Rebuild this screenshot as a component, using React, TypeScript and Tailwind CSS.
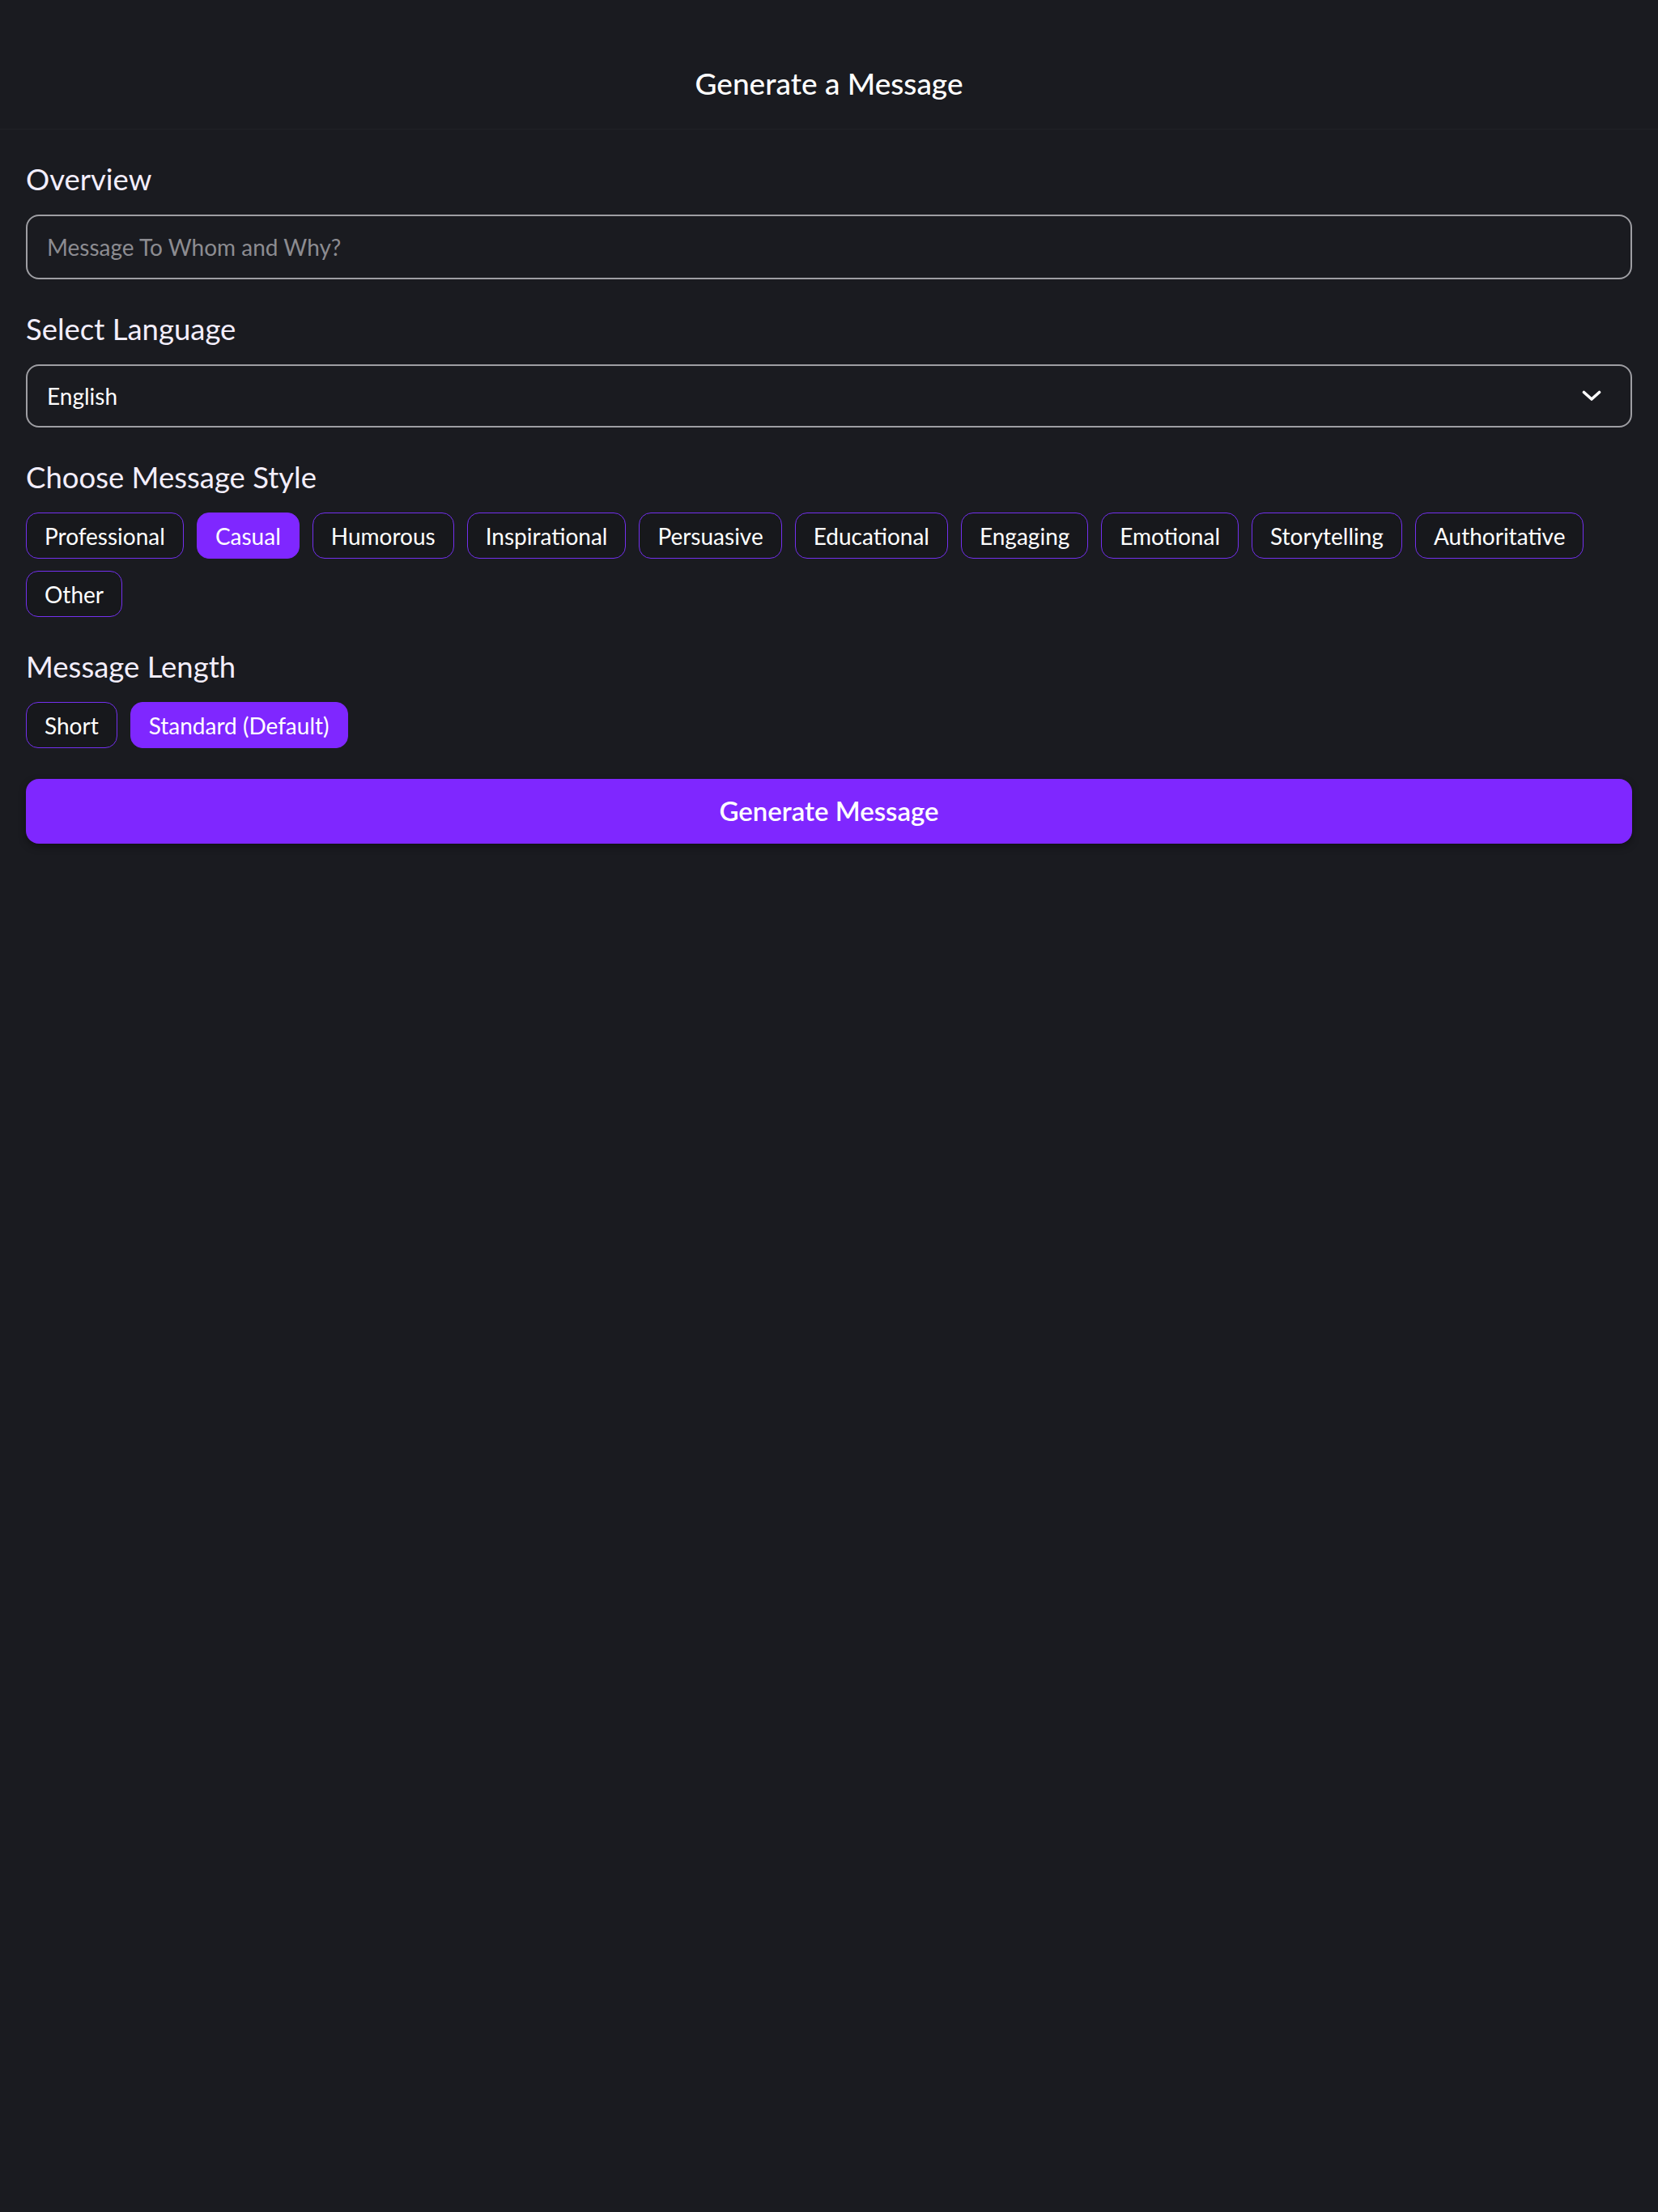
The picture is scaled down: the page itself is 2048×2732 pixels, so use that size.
import React, { useState } from "react";

const styles = [
  "Professional",
  "Casual",
  "Humorous",
  "Inspirational",
  "Persuasive",
  "Educational",
  "Engaging",
  "Emotional",
  "Storytelling",
  "Authoritative",
  "Other",
];

const lengths = ["Short", "Standard (Default)"];

function Chip({ label, active, onClick }: { label: string; active: boolean; onClick: () => void }) {
  return (
    <button
      onClick={onClick}
      className={
        active
          ? "h-[57px] px-[22px] flex items-center rounded-[15px] border-[1.5px] border-[#7f27ff] bg-[#7f27ff] text-white text-[28px] leading-[34px]"
          : "h-[57px] px-[22px] flex items-center rounded-[15px] border-[1.5px] border-[#7330ee] bg-[#17181c] text-white text-[28px] leading-[34px]"
      }
    >
      {label}
    </button>
  );
}

function Label({ children }: { children: React.ReactNode }) {
  return <h2 className="text-[36.5px] leading-[42px] text-[#f3eefc] mb-[23px]">{children}</h2>;
}

export default function App() {
  const [style, setStyle] = useState("Casual");
  const [length, setLength] = useState("Standard (Default)");

  return (
    <div className="min-h-screen bg-[#1a1b20] text-white font-['Lato',sans-serif]">
      <header className="h-[160px] pt-[46px] flex items-center justify-center border-b border-[#202127]">
        <h1 className="text-[37px] font-medium">Generate a Message</h1>
      </header>

      <main className="px-8 pt-10 flex flex-col">
        <section>
          <Label>Overview</Label>
          <input
            placeholder="Message To Whom and Why?"
            className="w-full h-[80px] px-6 rounded-2xl border-2 border-[#9e9ea3] bg-transparent text-[28px] text-white placeholder:text-[#8c8c91] outline-none"
          />
        </section>

        <section className="mt-10">
          <Label>Select Language</Label>
          <div className="w-full h-[78px] pl-6 pr-[36px] rounded-2xl border-2 border-[#9e9ea3] flex items-center justify-between">
            <span className="text-[28px]">English</span>
            <svg width="24" height="14" viewBox="0 0 24 14" fill="none">
              <path d="M2.5 2.5 L12 11 L21.5 2.5" stroke="white" strokeWidth="3.6" strokeLinecap="round" strokeLinejoin="round" />
            </svg>
          </div>
        </section>

        <section className="mt-10">
          <Label>Choose Message Style</Label>
          <div className="flex flex-wrap gap-x-4 gap-y-[15px]">
            {styles.map((s) => (
              <Chip key={s} label={s} active={s === style} onClick={() => setStyle(s)} />
            ))}
          </div>
        </section>

        <section className="mt-10">
          <Label>Message Length</Label>
          <div className="flex flex-wrap gap-4">
            {lengths.map((l) => (
              <Chip key={l} label={l} active={l === length} onClick={() => setLength(l)} />
            ))}
          </div>
        </section>

        <button className="mt-[38px] w-full h-[80px] rounded-2xl bg-[#7f27ff] text-white text-[33px] font-semibold shadow-[0_4px_10px_rgba(0,0,0,0.35)]">
          Generate Message
        </button>
      </main>
    </div>
  );
}
